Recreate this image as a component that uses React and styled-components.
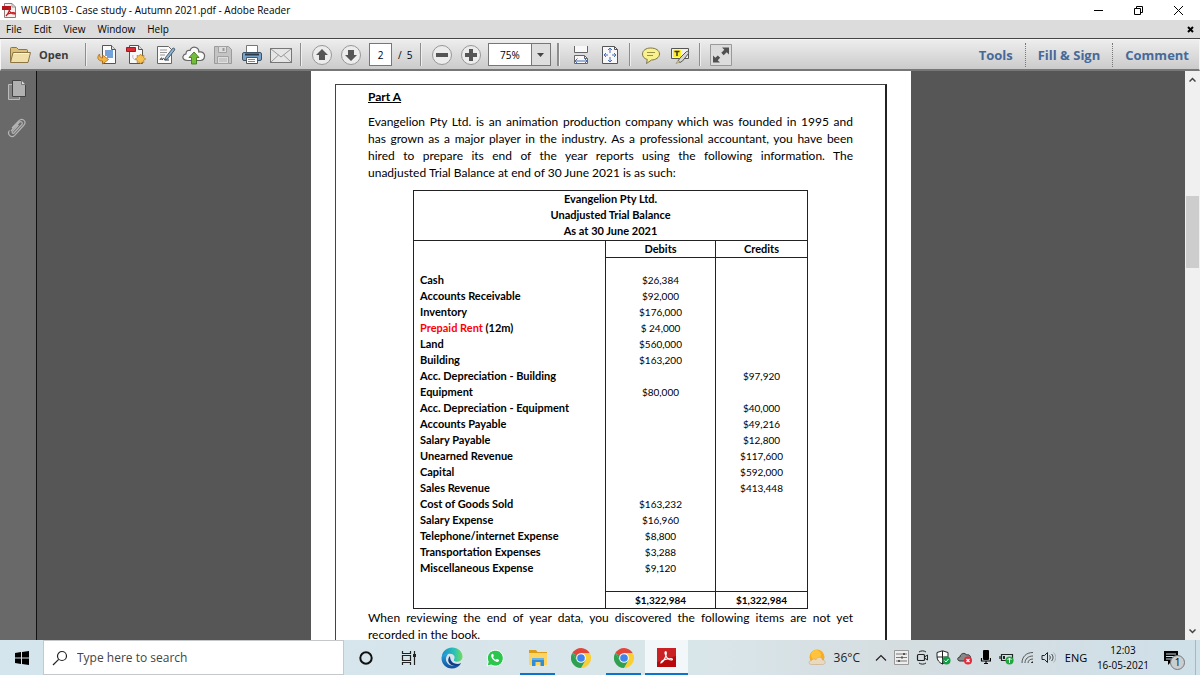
import React, { useState } from "react";
import styled, { createGlobalStyle } from "styled-components";

const GlobalStyle = createGlobalStyle`
  * { box-sizing: border-box; }
  html, body { margin: 0; padding: 0; overflow: hidden; }
  body { font-family: "Open Sans", "Noto Sans", sans-serif; font-size: 10px; color: #000; }
  button, input, select { font: inherit; color: inherit; margin: 0; padding: 0; border: 0; background: none; }
  svg { display: block; flex: none; }
`

const Screen = styled.div`
  display: flex;
  flex-direction: column;
  height: 100vh;
`

// window frame

const TitleBar = styled.header`
  display: flex;
  align-items: center;
  height: 20px;
  flex: none;
  padding: 0 2px;
  background: #fff;
`
const Title = styled.h1`
  flex: 1;
  margin: 0 0 0 5px;
  font-size: 10px;
  font-weight: 400;
  line-height: 20px;
`
const WindowButton = styled.button`
  display: flex;
  align-items: center;
  justify-content: center;
  width: 40px;
  height: 20px;
`
const MenuBar = styled.nav`
  display: flex;
  align-items: center;
  height: 19px;
  flex: none;
  padding: 0 6px;
  gap: 12px;
  background: #dcdcdc;
  border-bottom: 1px solid #444;
`
const MenuItem = styled.button`
  line-height: 18px;
`
const CloseDoc = styled.button`
  margin-left: auto;
`

// toolbar

const ToolBar = styled.div`
  display: flex;
  align-items: center;
  height: 32px;
  flex: none;
  padding: 0 10px 0 8px;
  background: linear-gradient(#ededed, #cbcbcb);
  border: 1px solid #f6f6f6;
  border-bottom: 2px solid #777;
`
const OpenButton = styled.button`
  display: flex;
  align-items: center;
  gap: 8px;
  width: 71px;
  font-size: 11px;
  font-weight: 700;
  color: #3b3b3b;
`
const ToolButton = styled.button`
  display: flex;
  align-items: center;
  justify-content: center;
  width: 29px;
  height: 26px;
`
const Separator = styled.span`
  width: ${(props) => (props.$double ? "3px" : "2px")};
  height: 23px;
  margin: 0 ${(props) => props.$gap || 5}px;
  background: #8d8d8d;
  border-right: 1px solid #efefef;
`
const PageInput = styled.input`
  width: 23px;
  height: 23px;
  margin-left: 4px;
  text-align: center;
  background: #fff;
  border: 1px solid #777;
`
const PageCount = styled.span`
  width: 23px;
  padding-left: 6px;
  white-space: pre;
`
const ZoomBox = styled.div`
  display: flex;
  position: relative;
  width: 63px;
  height: 23px;
  margin-left: 3px;
  border: 1px solid #777;
  background: linear-gradient(to right, #fff 42px, #777 42px, #777 43px, #dedede 43px);
  svg {
    position: absolute;
    right: 6px;
    top: 9px;
    pointer-events: none;
  }
`
const ZoomSelect = styled.select`
  appearance: none;
  width: 100%;
  padding-left: 11px;
  outline: none;
`
const Panels = styled.div`
  display: flex;
  margin-left: auto;
`
const PanelButton = styled.button`
  height: 24px;
  padding: 0 12px;
  font-size: 13px;
  line-height: 20px;
  font-weight: 700;
  color: #46699a;
  & + & { border-left: 1px dotted #777; }
  &:last-child { padding-right: 0; }
`

// document area

const Work = styled.div`
  display: flex;
  flex: 1;
  min-height: 0;
  background: #565656;
`
const SideBar = styled.aside`
  display: flex;
  flex-direction: column;
  align-items: center;
  gap: 17px;
  width: 37px;
  padding: 8px 2px 0 0;
  background: #696969;
  border-right: 1px solid #111;
`
const SideButton = styled.button`
  height: 22px;
`
const Viewer = styled.main`
  flex: 1;
  min-width: 0;
  overflow: hidden;
`
const Sheet = styled.article`
  max-width: 600px;
  margin: 0 auto;
  padding: 13px 24px 0;
  background: #fff;
  font-family: Lato, "Open Sans", sans-serif;
`
const Frame = styled.div`
  padding: 3px 32px 60px;
  border: 1px solid #444;
  border-right: 2px solid #222;
`
const PartTitle = styled.h2`
  margin: 0 0 8px;
  font-size: 12px;
  line-height: 17px;
  text-decoration: underline;
`
const Line = styled.span`
  display: block;
  text-align: justify;
  text-align-last: ${(props) => (props.$last ? "left" : "justify")};
`
const Text = styled.p`
  margin: 0;
  font-size: 12px;
  line-height: 17px;
`
const Balance = styled.table`
  width: 394px;
  margin: 9px 0 0 45px;
  border-collapse: collapse;
  table-layout: fixed;
  font-size: 11px;
  line-height: 16px;
  th, td { padding: 0; }
`
const TableTitle = styled.th`
  height: 50px;
  vertical-align: top;
  border: 1px solid #222;
`
const HeadCell = styled.th`
  height: 17px;
  vertical-align: top;
  border: 1px solid #222;
`
const NameCell = styled.th`
  height: ${(props) => props.$height || 16}px;
  text-align: left;
  border-left: 1px solid #222;
  && { padding-left: 6px; }
`
const CornerCell = styled.td`
  border-left: 1px solid #222;
  border-bottom: 1px solid #222;
`
const MoneyCell = styled.td`
  font-size: 10px;
  text-align: center;
  border-left: 1px solid #222;
  border-right: 1px solid #222;
`
const TotalCell = styled(MoneyCell)`
  font-weight: 700;
  border: 1px solid #222;
`
const Red = styled.span`
  color: #f00;
`
const ScrollBar = styled.div`
  display: flex;
  flex-direction: column;
  align-items: center;
  justify-content: space-between;
  width: 15px;
  padding: 6px 0;
  background: #f0f0f0;
`
const Thumb = styled.div`
  width: 13px;
  height: 72px;
  margin-bottom: 247px;
  background: #cdcdcd;
`

// taskbar

const TaskBar = styled.footer`
  display: flex;
  height: 35px;
  flex: none;
  background: linear-gradient(to right, #d4e5ee, #d9e5e9 60%, #d5dde0 75%, #cfe0e9);
`
const TaskButton = styled.button`
  display: flex;
  align-items: center;
  justify-content: center;
  position: relative;
  width: 43px;
  height: 35px;
  background: ${(props) => (props.$active ? "#f2f7f9" : "none")};
`
const OpenMark = styled.span`
  position: absolute;
  bottom: 0;
  left: ${(props) => (props.$wide ? 0 : 4)}px;
  right: ${(props) => (props.$wide ? 0 : 4)}px;
  height: 2px;
  background: #0a74cf;
`
const SearchBox = styled.label`
  display: flex;
  align-items: center;
  gap: 9px;
  width: 301px;
  padding-left: 8px;
  background: #fff;
  border: 1px solid #c4c8ca;
`
const SearchInput = styled.input`
  flex: 1;
  min-width: 0;
  font-size: 12px;
  outline: none;
  &::placeholder { color: #444; opacity: 1; }
`
const Tray = styled.div`
  display: flex;
  align-items: center;
  margin-left: auto;
`
const Weather = styled.button`
  display: flex;
  align-items: center;
  gap: 8px;
  margin-right: 10px;
  font-size: 12px;
  color: #222;
`
const TrayButton = styled.button`
  display: flex;
  align-items: center;
  justify-content: center;
  width: 21px;
  height: 35px;
`
const Language = styled.button`
  width: 34px;
  font-size: 11px;
`
const Clock = styled.button`
  width: 60px;
  line-height: 15px;
  text-align: center;
`
const NotifyButton = styled.button`
  position: relative;
  width: 42px;
  height: 35px;
  padding-left: 10px;
`
const Badge = styled.span`
  position: absolute;
  left: 17px;
  top: 15px;
  width: 15px;
  height: 15px;
  border: 1px solid #777;
  border-radius: 50%;
  background: #c9ced1;
  line-height: 13px;
`
const ShowDesktop = styled.button`
  width: 5px;
  height: 35px;
  border-left: 1px solid #aab7be;
`

// icons

const Svg = ({ w = 22, h = 22, box, children }) => (
  <svg width={w} height={h} viewBox={box || `0 0 ${w} ${h}`} fill="none" aria-hidden="true">
    {children}
  </svg>
)

const PdfIcon = () => (
  <Svg w={14} h={15}>
    <path d="M2.500 .5h7.500l3.500 3.500v10.500h-11z" fill="#f6f0ee" stroke="#8b7b79" />
    <path d="M10 .5v3.500h3.500" stroke="#999" />
    <path d="M0 3h9v4H0z" fill="#b3141b" />
    <path d="M4 13c2-2 4-6 3.500-8-.5-1.500-1.500 0-.5 2 1 2.500 3 4 5 4s1-1.500-1-1.300C8 10 5 11 4 13z" stroke="#c21820" strokeWidth="1.200" />
  </Svg>
)

const FolderIcon = () => (
  <Svg>
    <path d="M1.500 18V4.500c0-.6.4-1 1-1h5l2 2h8c.6 0 1 .4 1 1V9" fill="#dcc079" stroke="#8d7643" />
    <path d="M1.500 18.500 4 8.500h17.500l-2.500 10z" fill="#f0dfa8" stroke="#8d7643" strokeLinejoin="round" />
    <path d="M5 9.500h15" stroke="#fff5cf" />
  </Svg>
)

const ConvertIcon = () => (
  <Svg>
    <path d="M6.500 1.500h9l4 4v14h-13z" fill="#fbfbfb" stroke="#555" />
    <path d="M15.500 1.500v4h4" stroke="#555" fill="#ddd" />
    <path d="M9 7h8M9 9h8M9 11h8M11 13h6" stroke="#4787d0" strokeWidth="1.300" />
    <path d="M3.500 10c-3 3-2 7 3 7v3l6-4.500-6-4.500v3c-2 0-3-1-3-4z" fill="#f4b544" stroke="#a96a14" strokeWidth=".8" />
  </Svg>
)

const CreatePdfIcon = () => (
  <Svg>
    <path d="M4.500 1.500h9l4 4v14h-13z" fill="#f8f8f8" stroke="#555" />
    <path d="M13.500 1.500v4h4" fill="#ddd" stroke="#555" />
    <path d="M1.500 3.500h9v4h-9z" fill="#da2b32" stroke="#9b1b22" />
    <path d="M8 11c-1 3 1 5 4 5" stroke="#bbb" />
    <path d="m15.500 10 1.200 2 2.300-.6-.4 2.300 2.200 1.300-2.200 1.200.4 2.300-2.300-.5-1.200 2-1.200-2-2.300.5.4-2.300-2.200-1.200 2.200-1.300-.4-2.300 2.300.6z" fill="#f8c251" stroke="#b97c1c" strokeWidth=".7" />
  </Svg>
)

const SignIcon = () => (
  <Svg>
    <path d="M3.500 2.500h11l3 3v14h-14z" fill="#fafafa" stroke="#666" />
    <path d="M6 6h7M6 8.500h7M6 11h5" stroke="#999" />
    <path d="M6 16c1.500-3 2-3 2 0 2-3 2-1 3 0h4" stroke="#333" />
    <path d="m11.500 13.500 7-9c1-1 3 0 2 1.700l-7 8.800-3 1z" fill="#91b4cf" stroke="#3d5061" strokeWidth=".9" />
  </Svg>
)

const CloudIcon = () => (
  <Svg w={24}>
    <path d="M5.500 16.500C2 16.500.5 14.500 1 12.500c.3-1.500 1.500-2.500 3-2.700C4 7 6 5.800 8 6.500 9 3.500 11.500 2.500 14 3.500c2 .8 3 2.500 2.800 4.500 4-.8 6.200 2 5.700 4.700-.4 2.600-2.500 3.800-4 3.800z" fill="#fafafa" stroke="#666" strokeWidth="1.200" />
    <path d="m12 8 5 5.500h-2.500V20h-5v-6.500H7z" fill="#74bd3b" stroke="#3f7a1b" strokeWidth=".9" />
  </Svg>
)

const SaveIcon = () => (
  <Svg>
    <path d="M2.500 2.500h14l3 3v14h-17z" fill="#c4c4c4" stroke="#9a9a9a" />
    <path d="M6.500 2.500h8v6h-8zM5.500 12.500h11v7h-11z" fill="#dedede" stroke="#a2a2a2" />
    <path d="M11.500 4v3" stroke="#999" strokeWidth="2" />
    <path d="M7 15h8M7 17h8" stroke="#b4b4b4" />
  </Svg>
)

const PrintIcon = () => (
  <Svg>
    <path d="M5.500 10V1.500h11V10" fill="#fff" stroke="#777" />
    <rect x="1.500" y="8.500" width="19" height="8" rx="1.500" fill="#7ba2c7" stroke="#3d5368" />
    <path d="M4 10.500h14" stroke="#2c3b49" strokeWidth="2" />
    <path d="M5.500 13.500h11v6h-11z" fill="#fff" stroke="#555" />
    <path d="M7 15.500h7M7 17.500h7" stroke="#888" />
  </Svg>
)

const MailIcon = () => (
  <Svg>
    <rect x=".5" y="4.500" width="21" height="14" fill="#e6e6e6" stroke="#777" />
    <path d="m1 5 10 8 10-8M1 18l7.500-7M21 18l-7.500-7" stroke="#999" />
  </Svg>
)

const RoundIcon = ({ children }) => (
  <Svg>
    <circle cx="11" cy="11" r="9.500" fill="#ececec" stroke="#979797" />
    {children}
  </Svg>
)

const WidthIcon = () => (
  <Svg>
    <path d="M4.500 2v6.500h13V2" fill="#f8f8f8" stroke="#666" />
    <path d="M4.500 19.500v-8h10l3 3v5z" fill="#f8f8f8" stroke="#666" />
    <path d="M14.500 11.500v3h3" stroke="#666" />
    <path d="M5 17h12M7.500 14.500 5 17l2.500 2.500M14.500 14.500 17 17l-2.500 2.500" stroke="#4b6db4" />
  </Svg>
)

const FitIcon = () => (
  <Svg>
    <path d="M3.500 2.500h12l3 3v14h-15z" fill="#f8f8f8" stroke="#555" />
    <path d="M15.500 2.500v3h3" stroke="#555" />
    <path d="M11 4v5M9 6l2-2 2 2M11 18v-5M9 16l2 2 2-2M5 11h4M7 9l-2 2 2 2M17 11h-4M15 9l2 2-2 2" stroke="#4b6db4" />
  </Svg>
)

const NoteIcon = () => (
  <Svg>
    <path d="M10.500 4c5.500 0 9 2.500 9 6s-4 6-8 6l-5 3.500.8-4C4 14.500 2.500 12.500 2.500 10c0-3.500 3.500-6 8-6z" fill="#f9f08e" stroke="#7e7747" />
    <path d="M7 8.500h8M7 11.500h6" stroke="#99904a" />
  </Svg>
)

const HighlightIcon = () => (
  <Svg>
    <path d="M2.500 4.500h17v10h-17z" fill="#f2f2ea" stroke="#555" />
    <path d="M4 6h8v7H4z" fill="#ffee28" />
    <path d="M5.500 7.500h5M8 7v5" stroke="#333" strokeWidth="1.500" />
    <path d="m11 14 6.500-6.500c1.200-.7 2.800.6 2 2L13.500 17l-2.500 1.500-2-1.500z" fill="#d5d5d5" stroke="#555" />
    <path d="m9 16.500-2 3 4-1.500z" fill="#eee238" stroke="#777" strokeWidth=".5" />
  </Svg>
)

const ExpandIcon = () => (
  <Svg>
    <path d="M.5.5h21v21H.5z" fill="#dcdcdc" stroke="#999" />
    <path d="M12 3.500h7v7l-2.300-2.200-3 2.900-2.400-2.400 3-3zM3 11.500V18.500h7l-2.300-2.300 2.500-2.400-2.400-2.400-2.500 2.400z" fill="#505050" />
  </Svg>
)

const PagesIcon = () => (
  <Svg>
    <path d="M2.500 5.500h11v15h-11z" fill="#858585" stroke="#bbb" />
    <path d="M6.500 1.500h9l4 4v12h-13z" fill="#b1b1b1" stroke="#444" />
    <path d="M15.500 1.500v4h4" fill="#ddd" stroke="#777" />
  </Svg>
)

const ClipIcon = () => (
  <Svg>
    <path d="m5 13 8-8.500c2-2 4.500.2 2.700 2.200L8 15c-1 1-2.500-.3-1.500-1.300L12.500 7M3.500 12.500c-3 4 2 8 5.200 4.800L18 7c3-4-2-7.500-5-4.300L6 10" stroke="#b4b4b4" strokeWidth="1.200" />
  </Svg>
)

const EdgeIcon = () => (
  <Svg>
    <defs>
      <linearGradient id="edgeTop" x1="0" y1="0" x2="1" y2="0">
        <stop stopColor="#178dcb" /><stop offset=".6" stopColor="#2cc1b8" /><stop offset="1" stopColor="#72dc57" />
      </linearGradient>
      <linearGradient id="edgeLow" x1="0" y1="0" x2="0" y2="1">
        <stop stopColor="#28a8e0" /><stop offset="1" stopColor="#124c9e" />
      </linearGradient>
    </defs>
    <path d="M.8 9.500C1.500 4 6 .5 11 .5c6.500 0 10.500 4.500 10.500 9 0 3.500-2.700 5.200-5.500 5.200-2.500 0-3.800-1-3-2.200 1.700-2.500-.2-5.700-4-5.700-3.700 0-6.800 1.400-8.200 2.700z" fill="url(#edgeTop)" />
    <path d="M.5 11C.5 7.500 4.500 6 8.500 6.200c-3.500 2-4.500 6-2.500 9.300 2.500 4 8 4.500 14 .8C18 20 14.500 21.500 11 21.500 5 21.500.5 17 .5 11z" fill="url(#edgeLow)" />
    <path d="M9 9c-4 4-1 10 6 10 2 0 3.500-1 5-2.700-4 1.500-11 .7-11-7.300z" fill="#103f88" />
  </Svg>
)

const WhatsIcon = () => (
  <Svg w={18} h={18}>
    <path d="M1 17l1.200-4.200A8 8 0 1 1 5.200 16z" fill="#2cc64f" stroke="#fff" />
    <path d="M6.700 4.800c-2.200.5-2 3.200.3 5.700 2.500 2.700 5.500 3.200 6 1.300.3-1-.2-1.200-1.700-1.900-.6-.3-1 .9-1.500.8-1.300-.4-2.300-1.500-2.700-2.400-.2-.5 1-1 .7-1.600-.4-1.100-.6-2-1.100-1.900z" fill="#fff" />
  </Svg>
)

const ExplorerIcon = () => (
  <Svg w={20} h={18}>
    <path d="M1 1h7l1.500 2H19v4H1z" fill="#dc9c16" />
    <path d="M1 4h18v12H1z" fill="#fcd462" />
    <path d="M4 9h12v8h-3.500v-4h-5v4H4z" fill="#2f8cd7" />
    <path d="M4 9h12v2H4z" fill="#68b2e8" />
  </Svg>
)

const ChromeIcon = () => (
  <Svg w={20} h={20} box="0 0 24 24">
    <path d="M12 12 2 5.500A12 12 0 0 1 22.400 6H12z" fill="#e2463a" />
    <path d="M12 12V6h10.400A12 12 0 0 1 12 24l5.200-9z" fill="#f9cf37" />
    <path d="M12 12 17.200 15 12 24A12 12 0 0 1 1.600 6l5.200 9z" fill="#2ea04f" />
    <path d="M1.600 6 3 4.200 12 6v6z" fill="#e2463a" />
    <path d="M1.600 6 6.800 15 12 12z" fill="#2ea04f" />
    <circle cx="12" cy="12" r="5.800" fill="#fff" />
    <circle cx="12" cy="12" r="4.600" fill="#4083ee" />
  </Svg>
)

const ReaderIcon = () => (
  <Svg w={19} h={19}>
    <path d="M0 0h19v19H0z" fill="#b80a0d" />
    <path d="M0 0h19v8L0 14z" fill="#cb2124" />
    <path d="M4 15c2-.5 5.500-6.500 5.300-10-.1-2-1.700-1.500-1.200.5.8 3.500 3.400 6.300 6 6.500 2 .2 1.700-1.700-.7-1.500C9 10.700 3.500 13 4 15z" stroke="#fff" strokeWidth="1.200" />
  </Svg>
)

const WeatherIcon = () => (
  <Svg w={18} h={18}>
    <circle cx="9" cy="8" r="7.500" fill="#f7ac24" />
    <circle cx="8" cy="6" r="5" fill="#ffc33e" />
    <path d="M3.500 15.500c-3.500 0-3-4 0-4 1-2 3.500-2 4.500-.7C9.500 7 14.500 8 14.500 11c3.500 0 3.500 4.500 0 4.500z" fill="#ead9be" stroke="#c4ab86" strokeWidth=".6" />
  </Svg>
)

// data

const rows = [
  ["Cash", "$26,384", ""],
  ["Accounts Receivable", "$92,000", ""],
  ["Inventory", "$176,000", ""],
  ["Prepaid Rent", "$ 24,000", "", " (12m)"],
  ["Land", "$560,000", ""],
  ["Building", "$163,200", ""],
  ["Acc. Depreciation - Building", "", "$97,920"],
  ["Equipment", "$80,000", ""],
  ["Acc. Depreciation - Equipment", "", "$40,000"],
  ["Accounts Payable", "", "$49,216"],
  ["Salary Payable", "", "$12,800"],
  ["Unearned Revenue", "", "$117,600"],
  ["Capital", "", "$592,000"],
  ["Sales Revenue", "", "$413,448"],
  ["Cost of Goods Sold", "$163,232", ""],
  ["Salary Expense", "$16,960", ""],
  ["Telephone/internet Expense", "$8,800", ""],
  ["Transportation Expenses", "$3,288", ""],
  ["Miscellaneous Expense", "$9,120", ""],
]

const fileTools = [
  ["Convert", ConvertIcon],
  ["Create PDF", CreatePdfIcon],
  ["Sign", SignIcon],
  ["Upload", CloudIcon],
  ["Save", SaveIcon],
  ["Print", PrintIcon],
  ["Email", MailIcon],
]

const Toolbar = () => {
  const [page, setPage] = useState("2")
  const [zoom, setZoom] = useState("75%")

  return (
    <ToolBar>
      <OpenButton><FolderIcon />Open</OpenButton>
      <Separator />
      {fileTools.map(([name, Icon]) => (
        <ToolButton key={name} aria-label={name}><Icon /></ToolButton>
      ))}
      <Separator />
      <ToolButton aria-label="Previous page">
        <RoundIcon><path d="m11 5 6 6h-3v5H8v-5H5z" fill="#555" /></RoundIcon>
      </ToolButton>
      <ToolButton aria-label="Next page">
        <RoundIcon><path d="m11 17 6-6h-3V6H8v5H5z" fill="#555" /></RoundIcon>
      </ToolButton>
      <PageInput aria-label="Page" value={page} onChange={(e) => setPage(e.target.value)} />
      <PageCount>/  5</PageCount>
      <Separator />
      <ToolButton aria-label="Zoom out">
        <RoundIcon><path d="M5 9h12v4H5z" fill="#555" /></RoundIcon>
      </ToolButton>
      <ToolButton aria-label="Zoom in">
        <RoundIcon><path d="M9 5h4v4h4v4h-4v4H9v-4H5V9h4z" fill="#555" /></RoundIcon>
      </ToolButton>
      <ZoomBox>
        <ZoomSelect aria-label="Zoom" value={zoom} onChange={(e) => setZoom(e.target.value)}>
          <option>50%</option>
          <option>75%</option>
          <option>100%</option>
        </ZoomSelect>
        <Svg w={7} h={4}><path d="M0 0h7L3.500 4z" fill="#444" /></Svg>
      </ZoomBox>
      <Separator $double $gap={6} />
      <ToolButton aria-label="Fit width"><WidthIcon /></ToolButton>
      <ToolButton aria-label="Fit page"><FitIcon /></ToolButton>
      <Separator />
      <ToolButton aria-label="Add note"><NoteIcon /></ToolButton>
      <ToolButton aria-label="Highlight"><HighlightIcon /></ToolButton>
      <Separator />
      <ToolButton aria-label="Read mode"><ExpandIcon /></ToolButton>
      <Panels>
        <PanelButton>Tools</PanelButton>
        <PanelButton>Fill &amp; Sign</PanelButton>
        <PanelButton>Comment</PanelButton>
      </Panels>
    </ToolBar>
  )
}

const TrialBalance = () => (
  <Balance>
    <colgroup>
      <col width="192" />
      <col width="110" />
      <col width="92" />
    </colgroup>
    <thead>
      <tr>
        <TableTitle colSpan={3}>
          Evangelion Pty Ltd.<br />Unadjusted Trial Balance<br />As at 30 June 2021
        </TableTitle>
      </tr>
      <tr>
        <NameCell as="td" />
        <HeadCell scope="col">Debits</HeadCell>
        <HeadCell scope="col">Credits</HeadCell>
      </tr>
    </thead>
    <tbody>
      <tr><NameCell as="td" $height={14} /><MoneyCell /><MoneyCell /></tr>
      {rows.map(([name, debit, credit, note]) => (
        <tr key={name}>
          <NameCell scope="row">{note ? <><Red>{name}</Red>{note}</> : name}</NameCell>
          <MoneyCell>{debit}</MoneyCell>
          <MoneyCell>{credit}</MoneyCell>
        </tr>
      ))}
      <tr><NameCell as="td" /><MoneyCell /><MoneyCell /></tr>
    </tbody>
    <tfoot>
      <tr>
        <CornerCell />
        <TotalCell>$1,322,984</TotalCell>
        <TotalCell>$1,322,984</TotalCell>
      </tr>
    </tfoot>
  </Balance>
)

const Taskbar = () => (
  <TaskBar>
    <TaskButton aria-label="Start">
      <Svg w={14} h={14}><path d="M0 2l6-1v5.500H0zM7 .900 14 0v6.500H7zM0 7.500h6V13l-6-1zM7 7.500h7V14l-7-.9z" fill="#000" /></Svg>
    </TaskButton>
    <SearchBox>
      <Svg w={16} h={16}><circle cx="10" cy="6" r="4.500" stroke="#222" strokeWidth="1.200" /><path d="m6.700 9.300-5.700 5.700" stroke="#222" strokeWidth="1.200" /></Svg>
      <SearchInput aria-label="Search" placeholder="Type here to search" />
    </SearchBox>
    <TaskButton aria-label="Cortana">
      <Svg w={14} h={14}><circle cx="7" cy="7" r="5.700" stroke="#111" strokeWidth="2" /></Svg>
    </TaskButton>
    <TaskButton aria-label="Task view">
      <Svg w={16} h={14}><path d="M1.500 0v2.500h8V0M1.500 14v-2.500h8V14M1.500 4.500h8v5h-8zM13.500 0v14" stroke="#222" strokeWidth="1.200" /><path d="M12 3h3v3h-3z" fill="#222" /></Svg>
    </TaskButton>
    <TaskButton aria-label="Edge"><EdgeIcon /></TaskButton>
    <TaskButton aria-label="WhatsApp"><WhatsIcon /></TaskButton>
    <TaskButton aria-label="File Explorer"><ExplorerIcon /><OpenMark /></TaskButton>
    <TaskButton aria-label="Chrome"><ChromeIcon /></TaskButton>
    <TaskButton aria-label="Chrome window"><ChromeIcon /><OpenMark /></TaskButton>
    <TaskButton aria-label="Adobe Reader" $active><ReaderIcon /><OpenMark $wide /></TaskButton>
    <Tray>
      <Weather><WeatherIcon />36°C</Weather>
      <TrayButton aria-label="Hidden icons">
        <Svg w={12} h={8}><path d="m1 6.500 5-5 5 5" stroke="#222" strokeWidth="1.200" /></Svg>
      </TrayButton>
      <TrayButton aria-label="Audio settings">
        <Svg w={15} h={15}><path d="M.5.5h14v14H.5z" fill="#eee" stroke="#999" /><path d="M2 4h11M2 7.500h11M2 11h11" stroke="#777" /><path d="M9 3h2v2H9zM4 10h2v2H4zM7 6.500h2v2H7z" fill="#555" /></Svg>
      </TrayButton>
      <TrayButton aria-label="Meet now">
        <Svg w={13} h={15}><path d="M3 2c2-1.500 5-1.500 7 0M3 13c2 1.500 5 1.500 7 0" stroke="#222" /><rect x="1.500" y="4.500" width="7" height="6" rx="1" stroke="#222" strokeWidth="1.200" /><path d="m8.500 7 3-2v5l-3-2" stroke="#222" /></Svg>
      </TrayButton>
      <TrayButton aria-label="Security">
        <Svg w={15} h={15}><path d="M6.500.8 12 2.500v4c0 3.500-2.500 6-5.500 7.500C3 12.500 1 10 1 6.500v-4z" fill="#fff" stroke="#222" /><path d="M6.500 1v13M1 7h11" stroke="#222" /><circle cx="10.500" cy="10.500" r="4" fill="#159c46" /><path d="m8.500 10.500 1.500 1.500 2.500-3" stroke="#fff" /></Svg>
      </TrayButton>
      <TrayButton aria-label="OneDrive">
        <Svg w={16} h={14}><path d="M3 10C0 10 0 6 3 6c0-3.500 5-5 6.500-2C12 3 14 5 13.500 7.500V10z" fill="#888" stroke="#333" /><circle cx="11" cy="9.500" r="4" fill="#e02c3b" /><path d="m9.500 8 3 3m0-3-3 3" stroke="#fff" strokeWidth="1.200" /></Svg>
      </TrayButton>
      <TrayButton aria-label="Microphone">
        <Svg w={11} h={15}><rect x="3" y="0" width="6" height="10" rx="1" fill="#000" /><path d="M1.500 8v3h9V8M6 11v3M4 13.500h4" stroke="#000" strokeWidth="1.200" /></Svg>
      </TrayButton>
      <TrayButton aria-label="Battery">
        <Svg w={15} h={14}><path d="M2.500 3.500h11v6h-11zM1 5v3" stroke="#222" strokeWidth="1.200" /><path d="M4 5h2v3H4z" fill="#222" /><circle cx="10.500" cy="9.500" r="4" fill="#24a641" /><path d="M10.500 7v5M8.500 9l2-2 2 2" stroke="#fff" /></Svg>
      </TrayButton>
      <TrayButton aria-label="Wi-Fi">
        <Svg w={13} h={13}><path d="M1 12C1 6 5 1.500 12 1.500M4 12c0-4 3-7 8-7M7 12c0-2.500 2-4 5-4" stroke="#555" /><path d="M12 10.500V12h-2c0-1 1-1.500 2-1.500z" fill="#222" /></Svg>
      </TrayButton>
      <TrayButton aria-label="Volume">
        <Svg w={15} h={13}><path d="M1 4.500h2.500l3-3v10l-3-3H1z" stroke="#222" /><path d="M8.500 4.500c1 1 1 3 0 4M10.500 3c2 2 2 5 0 7" stroke="#333" /><path d="M12.500 1.500c3 3 3 7 0 10" stroke="#aaa" /></Svg>
      </TrayButton>
      <Language>ENG</Language>
      <Clock>12:03<br />16-05-2021</Clock>
      <NotifyButton aria-label="Notifications">
        <Svg w={16} h={16}><path d="M1 1h14v10H9l-4 4v-4H1z" fill="#000" /><path d="M3 4h10M3 6.500h10M3 9h6" stroke="#cbdbe3" /></Svg>
        <Badge>1</Badge>
      </NotifyButton>
      <ShowDesktop aria-label="Show desktop" />
    </Tray>
  </TaskBar>
)

export default function App() {
  return (
    <Screen>
      <GlobalStyle />
      <TitleBar>
        <PdfIcon />
        <Title>WUCB103 - Case study - Autumn 2021.pdf - Adobe Reader</Title>
        <WindowButton aria-label="Minimize"><Svg w={9} h={9}><path d="M0 4.500h9" stroke="#000" /></Svg></WindowButton>
        <WindowButton aria-label="Restore"><Svg w={9} h={9}><path d="M.5 2.500h6v6h-6zM2.500 2.500v-2h6v6h-2" stroke="#000" /></Svg></WindowButton>
        <WindowButton aria-label="Close"><Svg w={9} h={9}><path d="m0 0 9 9M9 0 0 9" stroke="#000" /></Svg></WindowButton>
      </TitleBar>
      <MenuBar>
        {["File", "Edit", "View", "Window", "Help"].map((item) => (
          <MenuItem key={item}>{item}</MenuItem>
        ))}
        <CloseDoc aria-label="Close document"><Svg w={7} h={7}><path d="m1 1 5 5M6 1 1 6" stroke="#000" strokeWidth="2" /></Svg></CloseDoc>
      </MenuBar>
      <Toolbar />
      <Work>
        <SideBar>
          <SideButton aria-label="Page thumbnails"><PagesIcon /></SideButton>
          <SideButton aria-label="Attachments"><ClipIcon /></SideButton>
        </SideBar>
        <Viewer>
          <Sheet>
            <Frame>
              <PartTitle>Part A</PartTitle>
              <Text>
                <Line>Evangelion Pty Ltd. is an animation production company which was founded in 1995 and</Line>
                <Line>has grown as a major player in the industry. As a professional accountant, you have been</Line>
                <Line>hired to prepare its end of the year reports using the following information. The</Line>
                <Line $last>unadjusted Trial Balance at end of 30 June 2021 is as such:</Line>
              </Text>
              <TrialBalance />
              <Text>
                <Line>When reviewing the end of year data, you discovered the following items are not yet</Line>
                <Line $last>recorded in the book.</Line>
              </Text>
            </Frame>
          </Sheet>
        </Viewer>
        <ScrollBar>
          <Svg w={7} h={5}><path d="m.5 4.500 3-3 3 3" stroke="#444" strokeWidth="1.500" /></Svg>
          <Thumb />
          <Svg w={7} h={5}><path d="m.5.5 3 3 3-3" stroke="#444" strokeWidth="1.500" /></Svg>
        </ScrollBar>
      </Work>
      <Taskbar />
    </Screen>
  )
}
